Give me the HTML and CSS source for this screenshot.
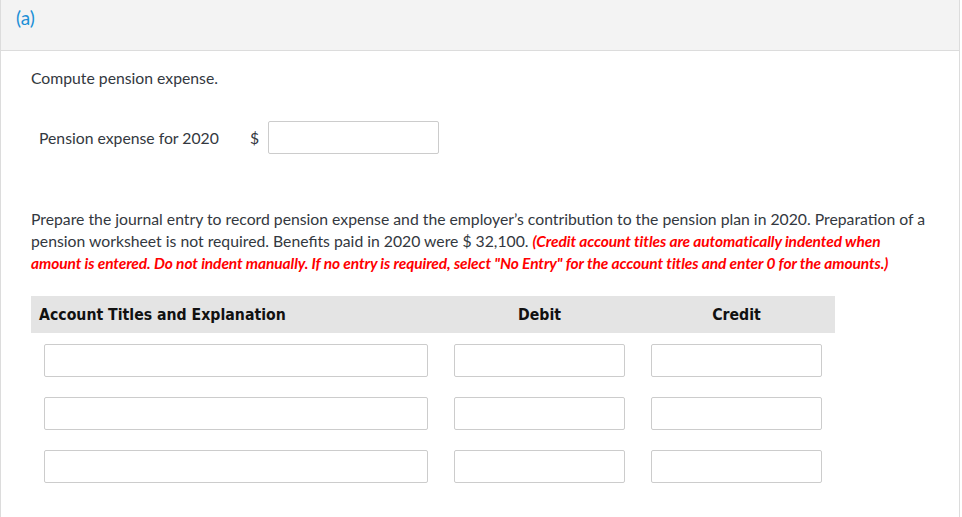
FILE: index.html
```html
<!DOCTYPE html>
<html lang="en">
<head>
    <meta charset="UTF-8">
    <title>Part (a)</title>
    <link rel="stylesheet" href="styles.css">
</head>
<body>
    <div class="panel">
        <div class="panel-head">(a)</div>

        <div class="panel-body">
            <p class="prompt">Compute pension expense.</p>

            <div class="amount-row">
                <span class="amount-label">Pension expense for 2020</span>
                <span class="currency">$</span>
                <input type="text" class="field field-amount">
            </div>

            <p class="instructions">
                Prepare the journal entry to record pension expense and the employer’s contribution to the pension plan in 2020. Preparation of a pension worksheet is not required. Benefits paid in 2020 were $ 32,100.
                <span class="note">(Credit account titles are automatically indented when amount is entered. Do not indent manually. If no entry is required, select "No Entry" for the account titles and enter 0 for the amounts.)</span>
            </p>

            <div class="journal">
                <div class="journal-head">
                    <div class="col-title">Account Titles and Explanation</div>
                    <div class="col-num">Debit</div>
                    <div class="col-num">Credit</div>
                </div>
                <div class="journal-row">
                    <input type="text" class="field">
                    <input type="text" class="field">
                    <input type="text" class="field">
                </div>
                <div class="journal-row">
                    <input type="text" class="field">
                    <input type="text" class="field">
                    <input type="text" class="field">
                </div>
                <div class="journal-row">
                    <input type="text" class="field">
                    <input type="text" class="field">
                    <input type="text" class="field">
                </div>
            </div>
        </div>
    </div>
</body>
</html>
```

FILE: styles.css
```css
* {
    margin: 0;
    padding: 0;
    box-sizing: border-box;
}

body {
    font-family: Lato, "Open Sans", sans-serif;
    color: #333840;
    background: white;
}

.panel {
    width: 960px;
    min-height: 540px;
    border-left: 1px solid #dcdcdc;
    border-right: 1px solid #dcdcdc;
}

.panel-head {
    height: 51px;
    padding: 6px 0 0 15px;
    background: #f3f3f3;
    border-bottom: 1px solid #dcdcdc;
    color: #1b8fd6;
    font-size: 19px;
}

.panel-body {
    padding: 17px 30px 0 30px;
}

.prompt {
    font-size: 15.75px;
    line-height: 20px;
}

.amount-row {
    display: flex;
    align-items: center;
    margin-top: 33px;
    padding-left: 8px;
    font-size: 15.75px;
}

.amount-label {
    width: 211px;
}

.currency {
    width: 18px;
}

.field {
    display: block;
    height: 33px;
    border: 1px solid #cccccc;
    border-radius: 2px;
    background: white;
    font-family: inherit;
    font-size: 14px;
}

.field-amount {
    width: 171px;
    height: 33px;
}

.instructions {
    margin-top: 54px;
    font-size: 15.75px;
    line-height: 22px;
}

.note {
    color: #ff0000;
    font-size: 15.5px;
    font-weight: bold;
    font-style: italic;
    letter-spacing: -0.1px;
}

.journal {
    width: 804px;
    margin-top: 22px;
}

.journal-head {
    display: grid;
    grid-template-columns: 410px 197px 197px;
    height: 37px;
    align-items: center;
    background: #e4e4e4;
    color: #111;
    font-family: "DejaVu Sans Condensed", "Open Sans", sans-serif;
    font-size: 15.7px;
    font-weight: bold;
}

.col-title {
    padding-left: 8px;
}

.col-num {
    text-align: center;
}

.journal-row {
    display: grid;
    grid-template-columns: 410px 197px 197px;
    margin-top: 20px;
}

.journal-head + .journal-row {
    margin-top: 11px;
}

.journal-row .field {
    margin: 0 13px;
    width: auto;
}
```
